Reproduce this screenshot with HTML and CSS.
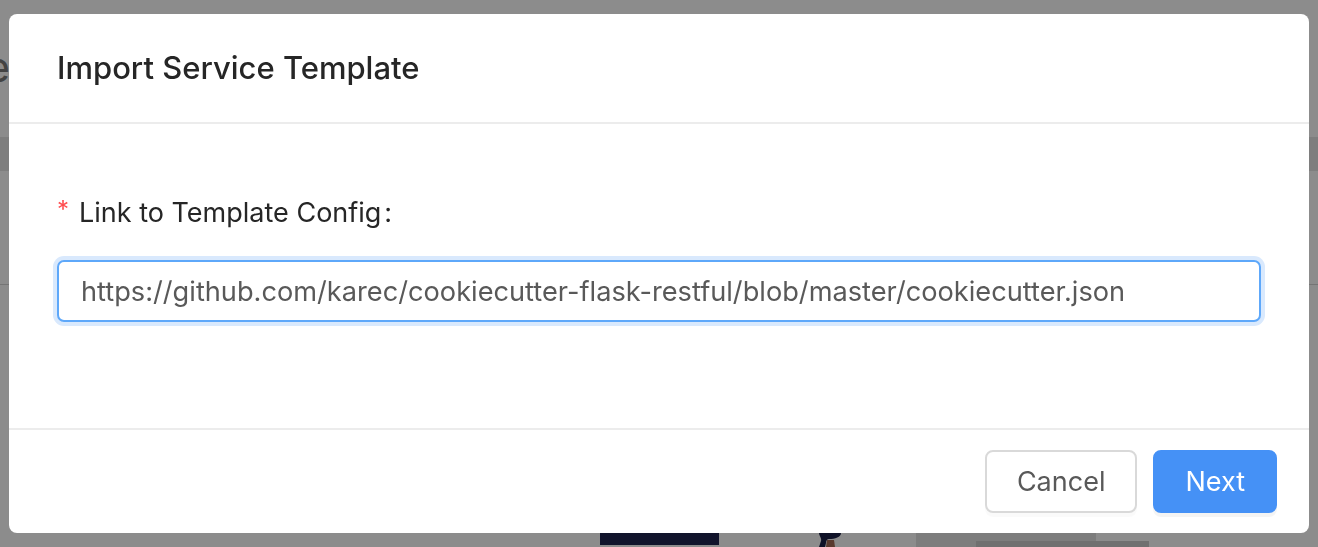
FILE: index.html
```html
<!DOCTYPE html>
<html lang="en">
<head>
    <meta charset="UTF-8">
    <meta name="viewport" content="width=device-width, initial-scale=1.0">
    <title>Import Service Template</title>
    <link rel="stylesheet" href="styles.css">
</head>
<body>
    <div class="page">
        <div class="page-head">
            <div class="page-title">Service</div>
        </div>
        <div class="table-head"></div>
        <div class="table-row"></div>
        <div class="page-spacer"></div>
        <div class="illus">
            <div class="illus-desk"></div>
            <svg class="illus-person" width="30" height="14" viewBox="0 0 30 14">
                <path d="M4 0 h22 c0 4 -6 6 -12 6 c-2 0 -3 2 -3 4 l-1 4 h-6 l2 -6 c1 -3 -2 -5 -2 -8z" fill="#1c2147"/>
                <path d="M12 7 h7 l1 7 h-9z" fill="#a56b55"/>
            </svg>
            <div class="illus-shelf">
                <div class="illus-box"></div>
            </div>
        </div>
    </div>
    <div class="overlay"></div>

    <div class="modal">
        <div class="modal-header">
            <div class="modal-title">Import Service Template</div>
        </div>
        <div class="modal-body">
            <label class="form-label" for="templateLink"><span class="required">*</span>Link to Template Config<span class="colon">:</span></label>
            <input type="text" id="templateLink" class="form-input" value="https://github.com/karec/cookiecutter-flask-restful/blob/master/cookiecutter.json">
        </div>
        <div class="modal-footer">
            <button class="btn">Cancel</button>
            <button class="btn btn-primary">Next</button>
        </div>
    </div>
</body>
</html>
```

FILE: styles.css
```css
body {
    margin: 0;
    width: 1318px;
    height: 547px;
    overflow: hidden;
    background: #fff;
    font-family: Inter, "Liberation Sans", sans-serif;
}
.page {
    display: flex;
    flex-direction: column;
    height: 547px;
}
.page-head {
    height: 137px;
    display: flex;
    align-items: center;
}
.page-title {
    width: 10px;
    display: flex;
    justify-content: flex-end;
    font-size: 42px;
    color: #7a7a7a;
    white-space: nowrap;
    margin-top: -4px;
}
.table-head {
    height: 34px;
    background: #e6e6e6;
}
.table-row {
    height: 113px;
    border-bottom: 1px solid #d6d6d6;
}
.page-spacer {
    flex: 1;
}
.illus {
    height: 14px;
    display: flex;
    padding-left: 600px;
}
.illus-desk {
    width: 119px;
    height: 12px;
    background: #1f2550;
}
.illus-person {
    margin-left: 96px;
}
.illus-shelf {
    margin-left: 71px;
    width: 180px;
    height: 14px;
    background: #e3e3e3;
    position: relative;
}
.illus-box {
    position: absolute;
    left: 60px;
    top: 8px;
    width: 173px;
    height: 6px;
    background: #cdcdcd;
}
.overlay {
    position: fixed;
    inset: 0;
    background: rgba(0, 0, 0, 0.45);
}
.modal {
    position: absolute;
    left: 9px;
    top: 14px;
    width: 1300px;
    background: #fff;
    border-radius: 8px;
    overflow: hidden;
}
.modal-header {
    padding: 32px 48px;
    border-bottom: 2px solid #ececec;
}
.modal-title {
    font-size: 31px;
    line-height: 44px;
    font-weight: 500;
    color: #262626;
}
.modal-body {
    padding: 66px 48px 106px;
    display: flex;
    flex-direction: column;
}
.form-label {
    display: flex;
    align-items: center;
    height: 44px;
    font-size: 27px;
    color: #262626;
    margin-bottom: 26px;
}
.required {
    color: #ff4d4f;
    font-size: 24px;
    margin-right: 10px;
    margin-top: -6px;
}
.colon {
    margin-left: 3px;
}
.form-input {
    box-sizing: border-box;
    height: 62px;
    width: 100%;
    padding: 0 22px;
    border: 2px solid #5ea8fa;
    border-radius: 7px;
    box-shadow: 0 0 0 4px #d9e9fd;
    font-family: Inter, "Liberation Sans", sans-serif;
    font-size: 27.2px;
    color: #595959;
    outline: none;
}
.modal-footer {
    padding: 20px 32px;
    border-top: 2px solid #ececec;
    display: flex;
    justify-content: flex-end;
    gap: 16px;
}
.btn {
    height: 63px;
    padding: 0 30px;
    border: 2px solid #d9d9d9;
    border-radius: 8px;
    background: #fff;
    color: #595959;
    font-family: Inter, "Liberation Sans", sans-serif;
    font-size: 27px;
    box-shadow: 0 4px 0 rgba(0, 0, 0, 0.02);
    cursor: pointer;
}
.btn-primary {
    background: #4591f6;
    border-color: #4591f6;
    color: #fff;
    box-shadow: 0 4px 0 rgba(0, 0, 0, 0.045);
}
```
